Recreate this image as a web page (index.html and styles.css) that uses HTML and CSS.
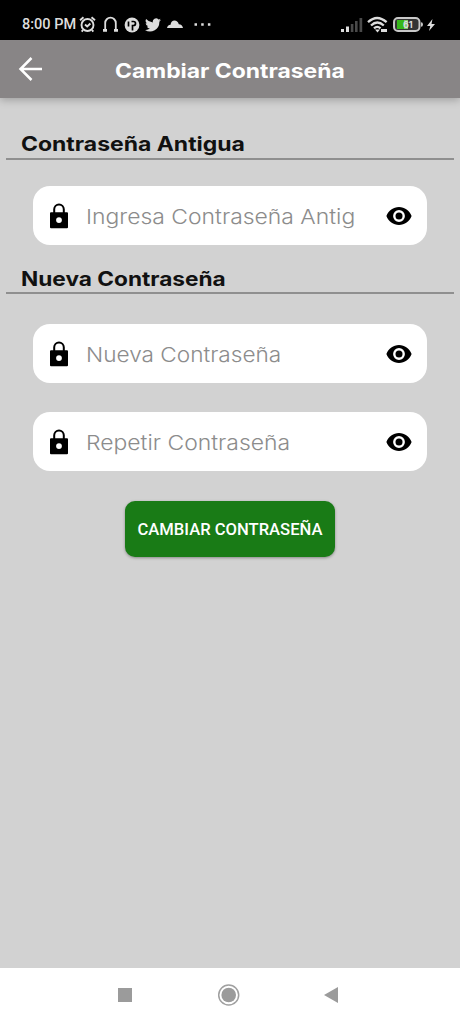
FILE: index.html
```html
<!DOCTYPE html>
<html lang="es">
<head>
<meta charset="utf-8">
<meta name="viewport" content="width=device-width, initial-scale=1">
<title>Cambiar Contraseña</title>
<link rel="stylesheet" href="styles.css">
</head>
<body>
<svg class="defs" width="0" height="0" aria-hidden="true">
  <symbol id="lock" viewBox="0 0 20 26"><path d="M5.2 10V6.300a4.800 4.800 0 0 1 9.600 0V10" fill="none" stroke="currentColor" stroke-width="2"/><path fill="currentColor" fill-rule="evenodd" d="M2 9.300h16q1 0 1 1v14q0 1-1 1H2q-1 0-1-1v-14q0-1 1-1zM10 14.200a2.900 2.900 0 1 0 0 5.800 2.900 2.900 0 0 0 0-5.800z"/></symbol>
  <symbol id="eye" viewBox="0 0 26 18"><path fill="currentColor" fill-rule="evenodd" d="M13 0C7.300 0 2.500 3.700.4 9c2.100 5.300 6.900 9 12.600 9s10.500-3.700 12.600-9C23.500 3.700 18.700 0 13 0zm0 3.100a5.900 5.900 0 1 1 0 11.800 5.900 5.900 0 0 1 0-11.800z"/><circle cx="13" cy="9" r="3.500" fill="currentColor"/></symbol>
</svg>
<div class="screen">
  <div class="status">
    <span class="clock">8:00 PM</span>
    <svg class="alarm" width="17" height="17" viewBox="0 0 17 17" fill="none" stroke="currentColor" stroke-width="1.900"><circle cx="8.500" cy="9" r="6"/><path d="M1 4.300 4.500 1.300M16 4.300 12.500 1.300M6 8.500l2.200 2 3.200-3M4 14l-1.300 1.700M13 14l1.300 1.700"/></svg>
    <svg class="headset" width="17" height="17" viewBox="0 0 17 17" fill="none" stroke="currentColor" stroke-width="1.800"><path d="M3.200 14V7a5.300 5.300 0 0 1 10.600 0v7"/><path d="M1 14.300h4M12 14.300h4" stroke-width="2.800"/></svg>
    <svg class="ptv" width="16" height="16" viewBox="0 0 16 16"><circle cx="8" cy="8" r="7.400" fill="currentColor"/><path d="M7.500 4.500h2a2 2 0 0 1 0 4h-1v5M4.500 4.500v5" fill="none" stroke="#000" stroke-width="1.700"/></svg>
    <svg class="bird" width="16" height="14" viewBox="0 0 24 20"><path fill="currentColor" d="M24 2.400a10 10 0 0 1-2.800.8A5 5 0 0 0 23.300.5a10 10 0 0 1-3.100 1.200 4.900 4.900 0 0 0-8.400 4.500A14 14 0 0 1 1.700 1.100a4.900 4.900 0 0 0 1.500 6.500A5 5 0 0 1 1 7a4.900 4.900 0 0 0 3.900 4.900 5 5 0 0 1-2.200.1 4.900 4.900 0 0 0 4.600 3.400A10 10 0 0 1 0 17.400 14 14 0 0 0 21.500 5z"/></svg>
    <svg class="cloud" width="16" height="9" viewBox="0 0 16 9" fill="currentColor"><path d="M0 8Q.5 5 3.500 4.800 4.300.6 7.500.6 10.600.6 11.800 4.300 15.300 4.600 16 8z"/></svg>
    <svg class="more" width="17" height="3" viewBox="0 0 17 3" fill="currentColor"><path d="M.5.300h2.500v2.400H.5zM7.200.300h2.500v2.400H7.200zM13.900.300h2.500v2.400h-2.500z"/></svg>
    <svg class="signal" width="22" height="15" viewBox="0 0 22 15"><path fill="#ddd" d="M0 12h3v3H0zM5 9.500h3V15H5z"/><path fill="#4a4a4a" d="M9.800 7h2.600v8H9.800zM14 4h2.600v11H14zM18.500 1h2.700v14h-2.700z"/></svg>
    <svg class="wifi" width="21" height="17" viewBox="0 0 21 17" fill="none" stroke="currentColor" stroke-width="2.300"><path d="M1 6.200q9-8.500 18.600 0M4 9.500q6.300-6 12.800 0M7 12.400q3.200-3 6.500 0"/><path d="M8 13.500h5l-2.500 3zM14 13h6v3h-6z" fill="currentColor" stroke="none"/></svg>
    <svg class="battery" width="30" height="15" viewBox="0 0 30 15"><rect x="1" y="1" width="25.500" height="13" rx="4" fill="#333" stroke="#c8c8c8" stroke-width="2"/><path d="M4 3h7v9H4z" fill="#35b719"/><path d="M11 3h4v9h-4z" fill="#7acb66"/><path d="M28 5.200q2 0 2 2.300t-2 2.300z" fill="#c8c8c8"/><text x="10" y="11" font-size="9" font-weight="700" fill="#ddd">61</text></svg>
    <svg class="bolt" width="8" height="12" viewBox="0 0 8 12"><path fill="currentColor" d="M5.500 0 0 7h3.300L2 12l6-7H4.500z"/></svg>
  </div>
  <header class="appbar">
    <svg class="back" width="26" height="26" viewBox="0 0 26 26" fill="none" stroke="currentColor" stroke-width="2.500"><path d="M24 13H2.500M13.500 2 2.500 13l11 11"/></svg>
    <h1 class="title">Cambiar Contraseña</h1>
  </header>
  <main class="content">
    <h2 class="section first"><span class="old">Contraseña Antigua</span></h2>
    <label class="field"><svg class="lock"><use href="#lock"/></svg><span class="hint hint-old">Ingresa Contraseña Antig</span><svg class="eye"><use href="#eye"/></svg></label>
    <h2 class="section second"><span class="new">Nueva Contraseña</span></h2>
    <label class="field"><svg class="lock"><use href="#lock"/></svg><span class="hint hint-new">Nueva Contraseña</span><svg class="eye"><use href="#eye"/></svg></label>
    <label class="field repeat"><svg class="lock"><use href="#lock"/></svg><span class="hint">Repetir Contraseña</span><svg class="eye"><use href="#eye"/></svg></label>
    <button class="submit">CAMBIAR CONTRASEÑA</button>
  </main>
  <nav class="nav">
    <svg width="16" height="16"><path d="M1 1h14v14H1z" fill="#9b9b9b"/></svg>
    <svg width="24" height="24"><circle cx="12.700" cy="12" r="10" fill="none" stroke="#a0a0a0" stroke-width="1.500"/><circle cx="12.700" cy="12" r="7.300" fill="#9b9b9b"/></svg>
    <svg width="16" height="16"><path d="M15 0v16L1 8z" fill="#9b9b9b"/></svg>
  </nav>
</div>
</body>
</html>
```
FILE: styles.css
```css
* { box-sizing: border-box; }
body { margin: 0; font-family: Inter, "Open Sans", sans-serif; }
.defs { position: absolute; }
svg { display: block; flex: none; }
.screen { width: 460px; height: 1024px; display: flex; flex-direction: column; background: #d2d2d2; overflow: hidden; }
.status { height: 40px; flex: none; display: flex; align-items: center; padding: 9px 25px 0 22px; background: #000; color: #ddd; }
.clock { width: 56px; font: 500 14.500px/16px Roboto, sans-serif; white-space: nowrap; }
.alarm { margin-left: 1px; }
.headset { margin-left: 6px; }
.ptv { margin-left: 5px; }
.bird { margin-left: 5px; }
.cloud { margin-left: 6px; }
.more { margin-left: 11px; }
.signal { margin-left: auto; }
.wifi { margin-left: 4px; }
.battery { margin-left: 5px; }
.bolt { margin-left: 4px; }
.appbar { height: 58px; flex: none; display: flex; align-items: center; padding: 0 18px; background: #888586; color: #fff; box-shadow: 0 2px 8px rgba(0,0,0,.25); }
.title { margin: 3px 0 0 71px; font-size: 20px; line-height: 28px; font-weight: 700; white-space: nowrap; transform: scaleX(1.145); transform-origin: left; }
.content { flex: 1; display: flex; flex-direction: column; padding: 32px 6px 0; }
.section { height: 30px; margin: 0; padding: 0 15px; border-bottom: 2px solid #8f8f8f; font-size: 20px; line-height: 28px; font-weight: 650; white-space: nowrap; color: #111; }
.section span { display: inline-block; transform-origin: left; }
.old { transform: scaleX(1.148); }
.new { transform: scaleX(1.132); line-height: 30px; }
.field { height: 59px; margin: 26px 27px 0; padding: 0 15px 0 16px; display: flex; align-items: center; background: #fff; border-radius: 17px; color: #000; }
.lock { width: 20px; height: 26px; }
.hint { margin: 2px 0 0 17px; white-space: nowrap; font-size: 20.500px; line-height: 30px; font-weight: 300; color: #8c8c8c; transform: scaleX(1.118); transform-origin: left; }
.hint-old { transform: scaleX(1.118); }
.hint-new { transform: scaleX(1.103); }
.eye { width: 26px; height: 18px; margin-left: auto; }
.second { margin-top: 19px; }
.second + .field { margin-top: 30px; }
.repeat { margin-top: 29px; }
.submit { width: 210px; height: 56px; margin: 30px auto 0; padding: 2px 0 0; border: 0; border-radius: 10px; background: #197b16; color: #fff; font: 500 16.600px/20px Roboto, sans-serif; white-space: nowrap; box-shadow: 0 1px 3px rgba(0,0,0,.35); }
.nav { height: 56px; flex: none; display: flex; align-items: center; justify-content: space-between; padding: 0 121px 2px 117px; background: #fff; }
```
